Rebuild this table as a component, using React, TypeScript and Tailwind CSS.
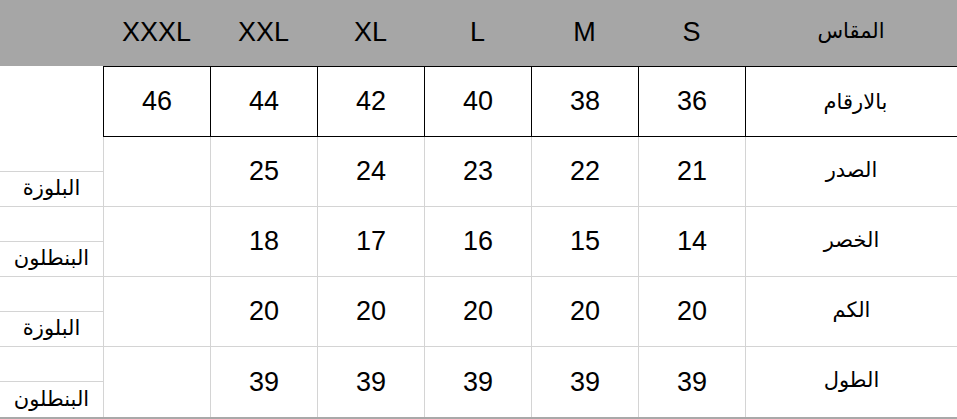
const sizes = ['XXXL', 'XXL', 'XL', 'L', 'M', 'S'];
const numbers = ['46', '44', '42', '40', '38', '36'];

const rows = [
  { label: 'الصدر', values: ['', '25', '24', '23', '22', '21'], side: 'البلوزة' },
  { label: 'الخصر', values: ['', '18', '17', '16', '15', '14'], side: 'البنطلون' },
  { label: 'الكم', values: ['', '20', '20', '20', '20', '20'], side: 'البلوزة' },
  { label: 'الطول', values: ['', '39', '39', '39', '39', '39'], side: 'البنطلون' },
];

const font = { fontFamily: '"Liberation Sans", "DejaVu Sans", Arial, sans-serif' };

export default function App() {
  return (
    <div className="w-[957px] h-[419px] bg-white text-black overflow-hidden" style={font}>
      {/* header */}
      <div className="flex h-[66px] bg-[#a6a6a6]">
        <div className="w-[103px] shrink-0" />
        {sizes.map((s) => (
          <div key={s} className="w-[107px] shrink-0 flex items-center justify-center text-[27px] pb-[2px]">
            {s}
          </div>
        ))}
        <div className="w-[212px] shrink-0 flex items-center justify-center text-[21px] pb-[4px]" dir="rtl">
          المقاس
        </div>
      </div>

      {/* numeric sizes */}
      <div className="flex h-[71px]">
        <div className="w-[103px] shrink-0" />
        <div className="flex border-y border-black">
          {numbers.map((n) => (
            <div key={n} className="w-[107px] shrink-0 border-l border-black flex items-center justify-center text-[27px]">
              {n}
            </div>
          ))}
          <div className="w-[212px] shrink-0 border-l border-black flex items-center justify-center text-[21px] pl-[8px]" dir="rtl">
            بالارقام
          </div>
        </div>
      </div>

      {/* measurements */}
      <div className="border-b-[3px] border-[#a9a9a9]">
        {rows.map((r, i) => {
          const last = i === rows.length - 1;
          return (
            <div key={r.label} className={`flex h-[70px] ${last ? '' : 'border-b border-[#d4d4d4]'}`}>
              <div className="w-[103px] shrink-0 flex flex-col">
                <div className="h-[35px] border-b border-[#d4d4d4]" />
                <div className="flex-1 flex items-center justify-center text-[21px] pb-[2px]" dir="rtl">
                  {r.side}
                </div>
              </div>
              {r.values.map((v, j) => (
                <div key={j} className="w-[107px] shrink-0 border-l border-[#d4d4d4] flex items-center justify-center text-[27px]">
                  {v}
                </div>
              ))}
              <div className="w-[212px] shrink-0 border-l border-[#d4d4d4] flex items-center justify-center text-[21px] pb-[4px]" dir="rtl">
                {r.label}
              </div>
            </div>
          );
        })}
      </div>
    </div>
  );
}
